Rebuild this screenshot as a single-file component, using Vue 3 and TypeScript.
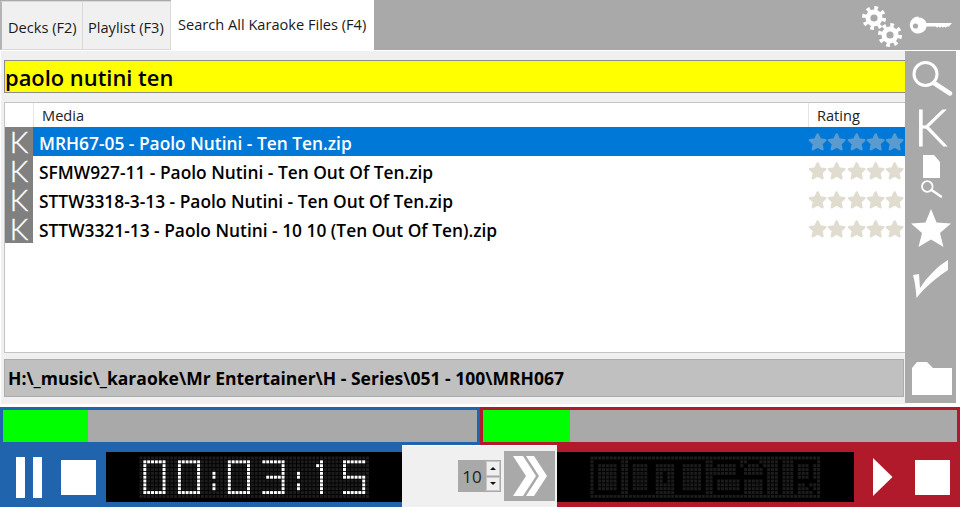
<script setup lang="ts">
interface Song { name: string; selected?: boolean }

const songs: Song[] = [
  { name: 'MRH67-05 - Paolo Nutini - Ten Ten.zip', selected: true },
  { name: 'SFMW927-11 - Paolo Nutini - Ten Out Of Ten.zip' },
  { name: 'STTW3318-3-13 - Paolo Nutini - Ten Out Of Ten.zip' },
  { name: 'STTW3321-13 - Paolo Nutini - 10 10 (Ten Out Of Ten).zip' },
];

const STAR = '9,1.5 11.3,6.6 16.6,7.2 12.7,10.8 13.8,16.2 9,13.5 4.2,16.2 5.3,10.8 1.4,7.2 6.7,6.6';

// led matrix, 60 x 11 dots
const COLS = 60;
const ROWS = 11;
const PITCH = 3.84;

const GLYPHS: Record<string, string[]> = {
  '0': ['######', '#....#', '#....#', '#....#', '#....#', '#....#', '#....#', '#....#', '######'],
  '1': ['..#', '.##', '..#', '..#', '..#', '..#', '..#', '..#', '..#'],
  '3': ['######', '.....#', '.....#', '.....#', '.#####', '.....#', '.....#', '.....#', '######'],
  '5': ['######', '#.....', '#.....', '#.....', '######', '.....#', '.....#', '.....#', '######'],
  ':': ['.', '.', '.', '#', '#', '.', '#', '#', '.'],
  'O': ['#######', '#.....#', '#.....#', '#.....#', '#.....#', '#.....#', '#.....#', '#.....#', '#######'],
  'R': ['######.', '#...#..', '#...#..', '#...#..', '#...#..', '######.', '#..#...', '#...#..', '#....#.'],
  'D': ['#######', '#.....#', '#.....#', '#..#..#', '#..#..#', '#..#..#', '#.....#', '#.....#', '#.....#'],
  'P': ['#######', '#.....#', '......#', '......#', '#######', '#......', '#......', '#......', '#######'],
  'A': ['..###..', '.#...#.', '#.....#', '#.....#', '#######', '#.....#', '#.....#', '#.....#', '#.....#'],
  'I': ['..#', '..#', '..#', '..#', '..#', '..#', '..#', '..#', '..#'],
};

function stamp(items: [string, number][]): Set<string> {
  const on = new Set<string>();
  for (const [ch, col] of items) {
    GLYPHS[ch].forEach((line, r) => {
      [...line].forEach((c, i) => {
        if (c === '#') on.add(`${col + i}:${r + 1}`);
      });
    });
  }
  return on;
}

interface Dot { x: number; y: number; fill: string }

function dots(mask: Set<string>, inverted: boolean): Dot[] {
  const out: Dot[] = [];
  for (let r = 0; r < ROWS; r++) {
    for (let c = 0; c < COLS; c++) {
      const hit = mask.has(`${c}:${r}`);
      if (inverted && hit) continue;
      out.push({
        x: c * PITCH + 0.5,
        y: r * PITCH + 0.5,
        fill: !inverted && hit ? '#ffffff' : '#1c1c1c',
      });
    }
  }
  return out;
}

const leftDots = dots(stamp([['0', 1], ['0', 10], [':', 19], ['0', 23], ['3', 32], [':', 41], ['1', 45], ['5', 53]]), false);
const rightDots = dots(stamp([['O', 1], ['0', 10], ['D', 16], ['O', 23], ['P', 32], ['A', 39], ['I', 47], ['R', 53]]), true);

const matrixWidth = COLS * PITCH;
const matrixHeight = ROWS * PITCH;
</script>

<template>
  <div class="app">
    <div class="tabs">
      <div class="tab first">Decks (F2)</div>
      <div class="tab">Playlist (F3)</div>
      <div class="tab active">Search All Karaoke Files (F4)</div>
      <div class="tab-icons">
        <svg width="44" height="46" viewBox="0 0 44 46">
          <g fill="#fff">
            <circle cx="14" cy="16" r="8.5" />
            <circle cx="14" cy="16" r="10" fill="none" stroke="#fff" stroke-width="4" stroke-dasharray="3.6 4.25" />
            <circle cx="30" cy="33" r="8.5" />
            <circle cx="30" cy="33" r="10" fill="none" stroke="#fff" stroke-width="4" stroke-dasharray="3.6 4.25" />
          </g>
          <circle cx="14" cy="16" r="3.6" fill="#a9a9a9" />
          <circle cx="30" cy="33" r="3.6" fill="#a9a9a9" />
        </svg>
        <svg class="key" width="44" height="20" viewBox="0 0 44 20">
          <path d="M9.5 1.5a8.5 8.5 0 0 1 8 5.5H43l-3 3.4h-2l-1.4 1.4-1.4-1.4-1.4 1.4-1.4-1.4-1.4 1.4-1.4-1.4-1.4 1.4-1.5-1.4H17.6a8.500 8.500 0 1 1-8.100-9.900z" fill="#fff" />
          <circle cx="6.500" cy="10" r="2.600" fill="#a9a9a9" />
        </svg>
      </div>
    </div>

    <div class="main">
      <div class="content">
        <div class="search">paolo nutini ten</div>
        <div class="table">
          <div class="thead">
            <div class="th-k"></div>
            <div class="th-media">Media</div>
            <div class="th-rating">Rating</div>
          </div>
          <div v-for="s in songs" :key="s.name" class="row" :class="{ selected: s.selected }">
            <div class="k-cell">K</div>
            <div class="name">{{ s.name }}</div>
            <div class="stars">
              <svg v-for="n in 5" :key="n" width="19.300" height="18" viewBox="0 0 18 18">
                <polygon :points="STAR" />
              </svg>
            </div>
          </div>
        </div>
        <div class="path">H:\_music\_karaoke\Mr Entertainer\H - Series\051 - 100\MRH067</div>
      </div>

      <div class="tools">
        <svg class="t-search" width="42" height="36" viewBox="0 0 42 36">
          <circle cx="14.500" cy="14" r="11.500" fill="none" stroke="#fff" stroke-width="3" />
          <path d="M23 23l16 10.500" stroke="#fff" stroke-width="4.500" stroke-linecap="round" />
        </svg>
        <div class="t-k">K</div>
        <svg class="t-doc" width="26" height="44" viewBox="0 0 26 44">
          <path d="M5 0h11l6 7v16H5z" fill="#fff" />
          <circle cx="9.300" cy="31.500" r="5.300" fill="none" stroke="#fff" stroke-width="1.800" />
          <path d="M13.500 35l9.500 6.500" stroke="#fff" stroke-width="2.400" stroke-linecap="round" />
        </svg>
        <svg class="t-star" width="42" height="40" viewBox="0 0 42 40">
          <polygon points="21,1 26.500,14.500 41,15.500 30,25 33.500,39 21,31.500 8.500,39 12,25 1,15.500 15.500,14.500" fill="#fff" />
        </svg>
        <svg class="t-check" width="36" height="38" viewBox="0 0 36 38">
          <path d="M0 15l6-1 1 14C14 17 25 6 35 0v10C23 18 12 27 3.500 38 3 30 2 22 0 15z" fill="#fff" />
        </svg>
        <svg class="t-folder" width="42" height="35" viewBox="0 0 42 35">
          <path d="M1 34V7l5-6h10l6 6h19v27z" fill="#fff" />
        </svg>
      </div>
    </div>

    <div class="progress">
      <div class="bar blue"><div class="fill" style="width: 85px"></div></div>
      <div class="bar red"><div class="fill" style="width: 87px"></div></div>
    </div>

    <div class="transport">
      <div class="deck deck-blue">
        <div class="pause"><span></span><span></span></div>
        <div class="stop"></div>
        <div class="display">
          <svg :width="matrixWidth" :height="matrixHeight">
            <rect v-for="(d, i) in leftDots" :key="i" :x="d.x" :y="d.y" width="3" height="3" :fill="d.fill" />
          </svg>
        </div>
      </div>

      <div class="middle">
        <div class="spinner">
          <span class="spin-val">10</span>
          <div class="spin-btns">
            <div class="spin-btn"><i class="up"></i></div>
            <div class="spin-btn"><i class="down"></i></div>
          </div>
        </div>
        <div class="skip">
          <svg width="36" height="42" viewBox="0 0 36 42">
            <path d="M1 1h10l13 20-13 20H1l13-20z" fill="#fff" />
            <path d="M14 1h8l13 20-13 20h-8l13-20z" fill="#fff" />
          </svg>
        </div>
      </div>

      <div class="deck deck-red">
        <div class="display">
          <svg :width="matrixWidth" :height="matrixHeight">
            <rect v-for="(d, i) in rightDots" :key="i" :x="d.x" :y="d.y" width="3" height="3" :fill="d.fill" />
          </svg>
        </div>
        <svg class="play" width="20" height="38" viewBox="0 0 20 38">
          <path d="M0 0l19.500 19L0 38z" fill="#fff" />
        </svg>
        <div class="stop"></div>
      </div>
    </div>
  </div>
</template>

<style>
html, body { margin: 0; background: #fff; overflow: hidden; }
</style>

<style scoped>
.app {
  width: 960px;
  height: 507px;
  display: flex;
  flex-direction: column;
  font-family: "Open Sans", "Noto Sans", sans-serif;
  background: #fff;
  color: #000;
  overflow: hidden;
}

/* tabs */
.tabs {
  height: 50px;
  flex: none;
  display: flex;
  background: #a9a9a9;
}
.tab {
  box-sizing: border-box;
  height: 49px;
  margin-top: 1px;
  padding: 15px 0 0 5px;
  width: 88px;
  background: #f0f0f0;
  border: 1px solid #d9d9d9;
  border-left: 0;
  font-size: 14.600px;
  color: #1a1a1a;
  white-space: nowrap;
}
.tab.first {
  width: 83px;
  padding-left: 6px;
  border-left: 2px solid #b4b4b4;
}
.tab.active {
  width: 203px;
  height: 50px;
  margin-top: 0;
  padding: 14px 0 0 7px;
  background: #fff;
  border: 0;
}
.tab-icons {
  margin-left: auto;
  display: flex;
  align-items: flex-start;
  gap: 5px;
  padding: 2px 7px 0 0;
}
.key { margin-top: 14px; }

/* main */
.main {
  height: 354px;
  flex: none;
  display: flex;
  padding-right: 4px;
  background: #fff;
}
.content {
  flex: 1;
  margin: 1px 0 0 1px;
  box-sizing: border-box;
  padding: 9px 0 6px 3px;
  display: flex;
  flex-direction: column;
  background: #f0f0f0;
  min-width: 0;
}
.search {
  box-sizing: border-box;
  height: 33px;
  border: 1px solid #8c8c8c;
  border-right: 0;
  background: #ff0;
  padding-left: 0;
  font-size: 21.900px;
  font-weight: 600;
  line-height: 34px;
}
.table {
  margin-top: 9px;
  box-sizing: border-box;
  height: 251px;
  flex: none;
  background: #fff;
  border: 1px solid #c4c4c4;
  border-right: 0;
}
.thead {
  height: 24px;
  display: flex;
  font-size: 14.600px;
  line-height: 25px;
  color: #222;
}
.th-k { width: 28px; border-right: 1px solid #e5e5e5; }
.th-media { flex: 1; padding-left: 8px; }
.th-rating { width: 88px; padding-left: 8px; border-left: 1px solid #e5e5e5; }
.row {
  height: 29px;
  display: flex;
  align-items: center;
  font-size: 17.350px;
  font-weight: 600;
}
.row.selected { background: #0078d7; color: #fff; }
.k-cell {
  width: 28px;
  height: 29px;
  flex: none;
  background: #808080;
  color: #fff;
  font-family: Lato, sans-serif;
  font-weight: 300;
  -webkit-text-stroke: 0.4px #fff;
  font-size: 29px;
  line-height: 29px;
  text-align: center;
}
.name { flex: 1; padding: 2px 0 0 6px; white-space: nowrap; }
.stars { display: flex; width: 97px; flex: none; padding-top: 1px; }
.stars polygon {
  fill: #e0dccf;
  stroke: #e0dccf;
  stroke-width: 2.500;
  stroke-linejoin: round;
}
.selected .stars polygon { fill: #5a9bd0; stroke: #5a9bd0; }
.path {
  margin-top: 6px;
  margin-right: 1px;
  box-sizing: border-box;
  height: 38px;
  background: #c0c0c0;
  border: 1px solid #acacac;
  padding-left: 3px;
  font-size: 17.500px;
  font-weight: 700;
  line-height: 37px;
  white-space: nowrap;
}

/* side toolbar */
.tools {
  width: 51px;
  flex: none;
  margin: 1px 0;
  background: #a9a9a9;
  display: flex;
  flex-direction: column;
  align-items: flex-start;
}
.tools svg { display: block; flex: none; }
.t-search { margin: 9px 0 0 6px; }
.t-k {
  margin: 6px 0 0 9px;
  height: 45px;
  color: #fff;
  font-family: Lato, sans-serif;
  font-weight: 300;
  -webkit-text-stroke: 0.9px #fff;
  font-size: 52px;
  line-height: 48px;
}
.t-doc { margin: 8px 0 0 13px; }
.t-star { margin: 9px 0 0 5px; }
.t-check { margin: 12px 0 0 8px; }
.t-folder { margin: auto 0 7px 6px; }

/* progress */
.progress {
  margin-top: 3px;
  height: 38px;
  flex: none;
  display: flex;
}
.bar {
  box-sizing: border-box;
  width: 480px;
  border: 3px solid;
  background: #a9a9a9;
}
.bar.blue { border-color: #1f64ad; }
.bar.red { border-color: #b01a2b; }
.fill { height: 100%; background: #0f0; }

/* transport */
.transport {
  flex: 1;
  display: flex;
  min-height: 0;
}
.deck {
  display: flex;
  align-items: center;
  box-sizing: border-box;
  padding-top: 2px;
}
.deck-blue { width: 402px; flex: none; background: #1f64ad; }
.deck-red { flex: 1; background: #b01a2b; }
.display {
  width: 296px;
  height: 50px;
  flex: none;
  background: #000;
  display: flex;
  align-items: center;
  justify-content: center;
}
.deck-blue .display { margin-left: 10px; }
.deck-red .display { width: 297px; }
.display svg { display: block; }
.pause {
  margin-left: 16px;
  display: flex;
  gap: 8px;
}
.pause span {
  display: block;
  width: 9px;
  height: 41px;
  background: #fff;
}
.stop {
  width: 35px;
  height: 35px;
  flex: none;
  background: #fff;
}
.deck-blue .stop { margin-left: 19px; }
.deck-red .stop { margin-left: 22px; }
.play { margin-left: 19px; }

/* middle */
.middle {
  width: 155px;
  flex: none;
  margin-top: 1px;
  background: #f0f0f0;
  display: flex;
  align-items: center;
  box-sizing: border-box;
  padding: 0 2px 1px 56px;
}
.spinner {
  width: 43px;
  height: 32px;
  flex: none;
  background: #a9a9a9;
  display: flex;
  align-items: center;
}
.spin-val {
  width: 28px;
  text-align: center;
  font-size: 17px;
  color: #222;
}
.spin-btns {
  width: 14px;
  height: 30px;
  display: flex;
  flex-direction: column;
  gap: 1px;
}
.spin-btn {
  flex: 1;
  background: #efefef;
  border: 1px solid #c8c8c8;
  box-sizing: border-box;
  display: flex;
  align-items: center;
  justify-content: center;
}
.spin-btn i {
  display: block;
  width: 0;
  height: 0;
  border-left: 3px solid transparent;
  border-right: 3px solid transparent;
}
.spin-btn i.up { border-bottom: 3px solid #111; }
.spin-btn i.down { border-top: 3px solid #111; }
.skip {
  margin-left: 3px;
  width: 51px;
  height: 50px;
  flex: none;
  background: #a9a9a9;
  display: flex;
  align-items: center;
  justify-content: center;
}
</style>
